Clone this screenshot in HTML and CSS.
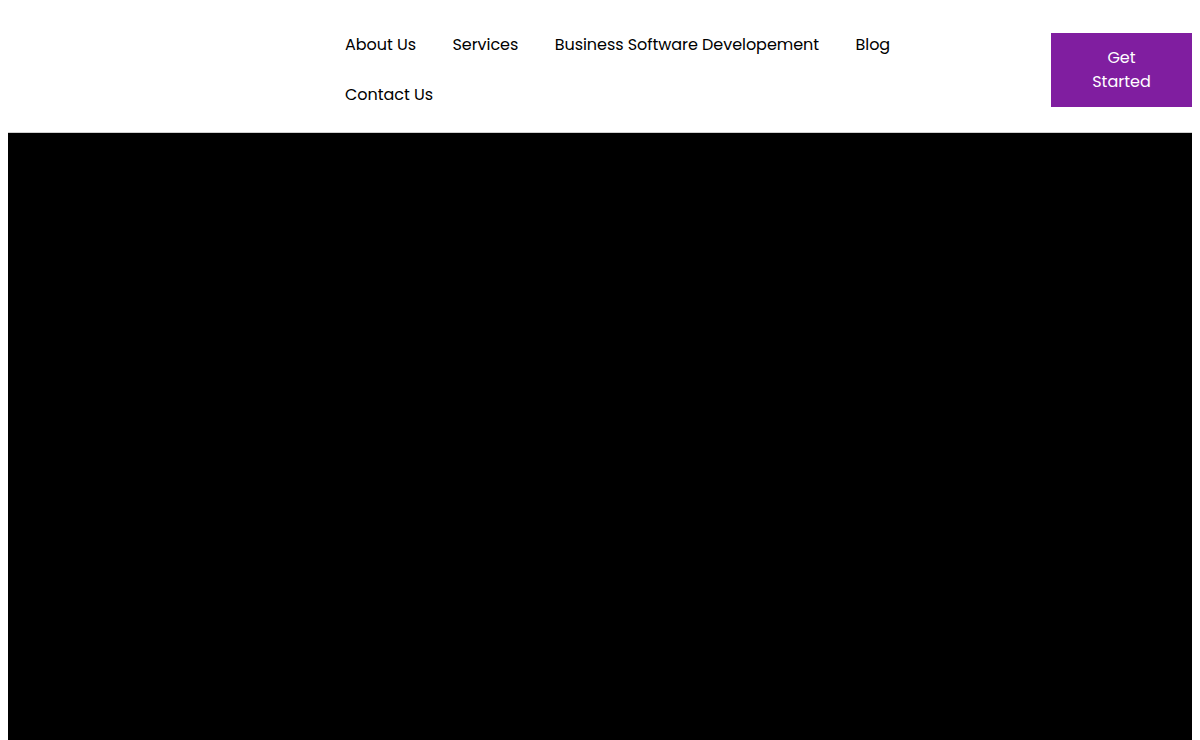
FILE: index.html
```html
<!DOCTYPE html>
<html lang="en">
<head>
<meta charset="utf-8">
<title>Home</title>
<link rel="stylesheet" href="styles.css">
</head>
<body>
<header class="site-header">
  <div class="logo"></div>
  <nav class="main-nav">
    <a class="nav-link" href="#">About Us</a>
    <a class="nav-link" href="#">Services</a>
    <a class="nav-link" href="#">Business Software Developement</a>
    <a class="nav-link" href="#">Blog</a>
    <a class="nav-link" href="#">Contact Us</a>
  </nav>
  <a class="cta" href="#">Get<br>Started</a>
</header>
<section class="hero"></section>
</body>
</html>
```

FILE: styles.css
```css
html, body {
  margin: 0;
  padding: 0;
}
body {
  margin: 8px 8px 0;
  background: #ffffff;
  font-family: "Poppins", "Open Sans", "Liberation Sans", sans-serif;
  color: #000000;
  overflow: hidden;
}
.site-header {
  display: flex;
  align-items: center;
  height: 124px;
}
.logo {
  width: 337px;
  flex: none;
}
.main-nav {
  display: flex;
  flex-wrap: wrap;
  column-gap: 36.5px;
  width: 620px;
  flex: none;
}
.nav-link {
  display: block;
  line-height: 50px;
  font-size: 16px;
  letter-spacing: -0.05px;
  color: #000000;
  text-decoration: none;
}
.cta {
  margin-left: auto;
  margin-bottom: 1px;
  width: 141px;
  height: 74px;
  box-sizing: border-box;
  background: #801ea0;
  color: #ffffff;
  font-size: 16px;
  line-height: 24px;
  text-decoration: none;
  display: flex;
  align-items: center;
  justify-content: center;
  text-align: center;
}
.hero {
  height: calc(100vh - 132px);
  box-sizing: border-box;
  background: #000000;
  border-top: 1px solid #d0d0d0;
}
```
